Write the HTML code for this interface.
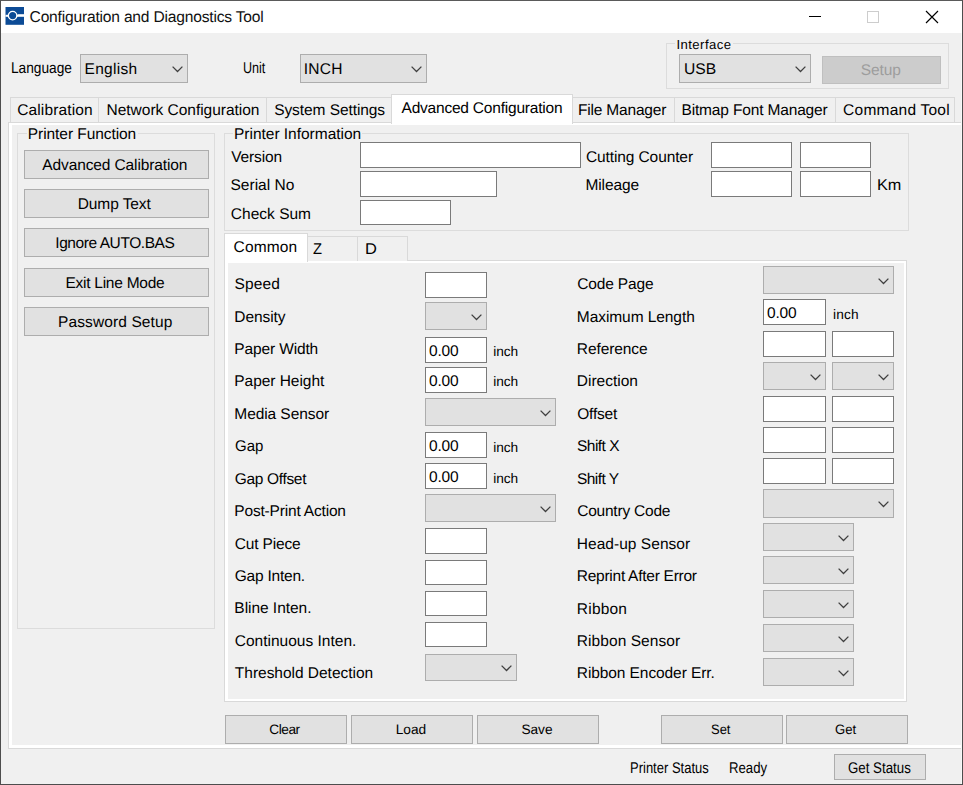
<!DOCTYPE html>
<html><head><meta charset="utf-8"><title>Configuration and Diagnostics Tool</title>
<style>
*{box-sizing:border-box;margin:0;padding:0}
html,body{width:963px;height:785px;overflow:hidden;background:#f0f0f0}
body{font-family:"Liberation Sans",sans-serif;font-size:15px;color:#000;position:relative;text-rendering:geometricPrecision}
div,svg,span{position:absolute}
.t{white-space:nowrap;line-height:20px;height:20px}
.in{background:#fff;border:1px solid #7a7a7a}
.cb{background:#e1e1e1;border:1px solid #adadad}
.btn{background:#e1e1e1;border:1px solid #adadad}
.gb{border:1px solid #dcdcdc}
.tab{border:1px solid #d9d9d9;border-bottom:none;background:#f0f0f0}
</style></head><body>

<div style="left:1px;top:1px;width:961px;height:32px;background:#fff"></div>
<svg style="left:5px;top:6px" width="20" height="20" viewBox="0 0 20 20"><rect x="0.5" y="1" width="18.5" height="17.8" fill="#0c4b96"/><rect x="0.5" y="8.8" width="18.5" height="2" fill="#fff"/><path d="M12 8.8L13.2 7.9H19V8.8Z" fill="#fff"/><circle cx="7.6" cy="9.6" r="4.25" fill="#0c4b96" stroke="#fff" stroke-width="1.3"/></svg>
<div class="t" style="top:8px;font-size:15.6px;left:29.58px;letter-spacing:-0.198px;color:#111;">Configuration and Diagnostics Tool</div>
<div style="left:809px;top:16px;width:12px;height:1px;background:#000"></div>
<div style="left:867px;top:11px;width:12px;height:12px;border:1px solid #cdcdcd"></div>
<svg style="left:925px;top:10px" width="14" height="14" viewBox="0 0 14 14"><path d="M1 1L13 13M13 1L1 13" stroke="#000" stroke-width="1.15" fill="none"/></svg>
<div class="t" style="top:59px;font-size:15.5px;left:10.74px;transform-origin:0 50%;transform:scaleX(0.8845);">Language</div>
<div class="cb" style="left:80px;top:54px;width:108px;height:29px"><svg style="right:4.2px;top:11.0px" width="11" height="7" viewBox="0 0 11 7"><path d="M0.6 0.6L5.5 5.5L10.4 0.6" fill="none" stroke="#404040" stroke-width="1.3"/></svg></div>
<div class="t" style="top:60px;font-size:15.5px;left:84.60px;letter-spacing:0.283px;">English</div>
<div class="t" style="top:59px;font-size:15.5px;left:242.91px;transform-origin:0 50%;transform:scaleX(0.8104);">Unit</div>
<div class="cb" style="left:300px;top:54px;width:127px;height:29px"><svg style="right:4.2px;top:11.0px" width="11" height="7" viewBox="0 0 11 7"><path d="M0.6 0.6L5.5 5.5L10.4 0.6" fill="none" stroke="#404040" stroke-width="1.3"/></svg></div>
<div class="t" style="top:60px;font-size:15.5px;left:303.69px;letter-spacing:0.297px;">INCH</div>
<div class="gb" style="left:666px;top:43px;width:283px;height:46px;"></div>
<div style="left:675.3px;top:43px;width:57.5px;height:1px;background:#f0f0f0"></div>
<div class="t" style="top:35px;font-size:13.1px;left:676.41px;letter-spacing:0.464px;">Interface</div>
<div class="cb" style="left:679px;top:54px;width:132px;height:29px"><svg style="right:4.2px;top:11.0px" width="11" height="7" viewBox="0 0 11 7"><path d="M0.6 0.6L5.5 5.5L10.4 0.6" fill="none" stroke="#404040" stroke-width="1.3"/></svg></div>
<div class="t" style="top:60px;font-size:15.5px;left:683.80px;transform-origin:0 50%;transform:scaleX(1.0100);">USB</div>
<div class="btn" style="left:822px;top:56px;width:119px;height:28px;background:#cccccc;border-color:#bfbfbf"></div>
<div class="t" style="top:61px;font-size:15.5px;left:860.70px;letter-spacing:-0.067px;color:#9d9d9d;">Setup</div>
<div style="left:8px;top:122px;width:960px;height:627px;border:1px solid #d9d9d9;background:#fff"></div>
<div style="left:12px;top:125px;width:949px;height:620px;background:#f0f0f0"></div>
<div style="left:961px;top:33px;width:1px;height:751px;background:#f8f8f8"></div>
<div class="tab" style="left:10px;top:97px;width:89px;height:25px;"></div>
<div class="t" style="top:101px;font-size:15.5px;left:17.16px;letter-spacing:0.134px;">Calibration</div>
<div class="tab" style="left:98px;top:97px;width:169px;height:25px;"></div>
<div class="t" style="top:101px;font-size:15.5px;left:106.56px;letter-spacing:-0.021px;">Network Configuration</div>
<div class="tab" style="left:266px;top:97px;width:126px;height:25px;"></div>
<div class="t" style="top:101px;font-size:15.5px;left:274.20px;letter-spacing:-0.076px;">System Settings</div>
<div class="tab" style="left:572px;top:97px;width:103px;height:25px;"></div>
<div class="t" style="top:101px;font-size:15.5px;left:578.02px;letter-spacing:-0.191px;">File Manager</div>
<div class="tab" style="left:674px;top:97px;width:162px;height:25px;"></div>
<div class="t" style="top:101px;font-size:15.5px;left:681.48px;letter-spacing:-0.157px;">Bitmap Font Manager</div>
<div class="tab" style="left:835px;top:97px;width:120px;height:25px;"></div>
<div class="t" style="top:101px;font-size:15.5px;left:843.12px;letter-spacing:0.236px;">Command Tool</div>
<div class="tab" style="left:391px;top:94px;width:182px;height:30px;background:#fff"></div>
<div class="t" style="top:99px;font-size:15.5px;left:401.51px;letter-spacing:-0.208px;">Advanced Configuration</div>
<div class="gb" style="left:17px;top:133px;width:198px;height:496px;"></div>
<div style="left:26.5px;top:133px;width:111.1px;height:1px;background:#f0f0f0"></div>
<div class="t" style="top:125px;font-size:15.5px;left:27.83px;letter-spacing:-0.068px;">Printer Function</div>
<div class="btn" style="left:24px;top:150px;width:185px;height:29px;"></div>
<div class="t" style="top:156px;font-size:15.5px;left:42.36px;letter-spacing:-0.121px;">Advanced Calibration</div>
<div class="btn" style="left:24px;top:189px;width:185px;height:29px;"></div>
<div class="t" style="top:195px;font-size:15.5px;left:77.64px;letter-spacing:-0.073px;">Dump Text</div>
<div class="btn" style="left:24px;top:228px;width:185px;height:29px;"></div>
<div class="t" style="top:234px;font-size:15.5px;left:55.27px;letter-spacing:-0.424px;">Ignore AUTO.BAS</div>
<div class="btn" style="left:24px;top:268px;width:185px;height:29px;"></div>
<div class="t" style="top:274px;font-size:15.5px;left:65.47px;letter-spacing:-0.258px;">Exit Line Mode</div>
<div class="btn" style="left:24px;top:307px;width:185px;height:29px;"></div>
<div class="t" style="top:313px;font-size:15.5px;left:58.02px;letter-spacing:0.111px;">Password Setup</div>
<div class="gb" style="left:224px;top:133px;width:685px;height:98px;"></div>
<div style="left:233px;top:133px;width:129.3px;height:1px;background:#f0f0f0"></div>
<div class="t" style="top:125px;font-size:15.5px;left:234.00px;letter-spacing:-0.018px;">Printer Information</div>
<div class="t" style="top:148px;font-size:15.5px;left:231.20px;letter-spacing:-0.133px;">Version</div>
<div class="t" style="top:176px;font-size:15.5px;left:230.44px;letter-spacing:0.028px;">Serial No</div>
<div class="t" style="top:205px;font-size:15.5px;left:230.79px;letter-spacing:0.018px;">Check Sum</div>
<div class="in" style="left:360px;top:142px;width:221px;height:26px"></div>
<div class="in" style="left:360px;top:171px;width:137px;height:26px"></div>
<div class="in" style="left:360px;top:200px;width:91px;height:25px"></div>
<div class="t" style="top:148px;font-size:15.5px;left:585.91px;letter-spacing:-0.101px;">Cutting Counter</div>
<div class="t" style="top:176px;font-size:15.5px;left:585.45px;letter-spacing:-0.115px;">Mileage</div>
<div class="in" style="left:711px;top:142px;width:81px;height:26px"></div>
<div class="in" style="left:800px;top:142px;width:71px;height:26px"></div>
<div class="in" style="left:711px;top:171px;width:81px;height:26px"></div>
<div class="in" style="left:800px;top:171px;width:71px;height:26px"></div>
<div class="t" style="top:176px;font-size:15.5px;left:876.60px;transform-origin:0 50%;transform:scaleX(1.0470);">Km</div>
<div style="left:224px;top:260px;width:683px;height:442px;border:1px solid #d9d9d9;background:#fff"></div>
<div style="left:228px;top:263px;width:676px;height:436px;background:#f0f0f0"></div>
<div class="tab" style="left:307px;top:236px;width:51px;height:25px;"></div>
<div class="t" style="top:240px;font-size:15.5px;left:313.20px;transform-origin:0 50%;transform:scaleX(0.9480);">Z</div>
<div class="tab" style="left:357px;top:236px;width:51px;height:25px;"></div>
<div class="t" style="top:240px;font-size:15.5px;left:365.20px;transform-origin:0 50%;transform:scaleX(1.0618);">D</div>
<div class="tab" style="left:224px;top:233px;width:84px;height:29px;background:#fff"></div>
<div class="t" style="top:238px;font-size:15.5px;left:233.62px;letter-spacing:0.138px;">Common</div>
<div class="t" style="top:275px;font-size:15.5px;left:234.41px;letter-spacing:0.183px;">Speed</div>
<div class="t" style="top:308px;font-size:15.5px;left:234.34px;letter-spacing:-0.093px;">Density</div>
<div class="t" style="top:340px;font-size:15.5px;left:234.34px;letter-spacing:-0.141px;">Paper Width</div>
<div class="t" style="top:372px;font-size:15.5px;left:234.34px;letter-spacing:-0.045px;">Paper Height</div>
<div class="t" style="top:405px;font-size:15.5px;left:234.34px;letter-spacing:-0.080px;">Media Sensor</div>
<div class="t" style="top:437px;font-size:15.5px;left:234.57px;transform-origin:0 50%;transform:scaleX(0.9670);">Gap</div>
<div class="t" style="top:470px;font-size:15.5px;left:234.70px;letter-spacing:-0.324px;">Gap Offset</div>
<div class="t" style="top:502px;font-size:15.5px;left:234.34px;letter-spacing:-0.184px;">Post-Print Action</div>
<div class="t" style="top:535px;font-size:15.5px;left:234.70px;letter-spacing:-0.154px;">Cut Piece</div>
<div class="t" style="top:567px;font-size:15.5px;left:234.70px;letter-spacing:-0.212px;">Gap Inten.</div>
<div class="t" style="top:599px;font-size:15.5px;left:234.34px;letter-spacing:-0.038px;">Bline Inten.</div>
<div class="t" style="top:632px;font-size:15.5px;left:234.70px;letter-spacing:0.009px;">Continuous Inten.</div>
<div class="t" style="top:664px;font-size:15.5px;left:234.86px;letter-spacing:-0.025px;">Threshold Detection</div>
<div class="t" style="top:275px;font-size:15.5px;left:577.16px;letter-spacing:-0.130px;">Code Page</div>
<div class="t" style="top:308px;font-size:15.5px;left:576.84px;letter-spacing:-0.074px;">Maximum Length</div>
<div class="t" style="top:340px;font-size:15.5px;left:576.84px;letter-spacing:-0.090px;">Reference</div>
<div class="t" style="top:372px;font-size:15.5px;left:576.84px;letter-spacing:-0.003px;">Direction</div>
<div class="t" style="top:405px;font-size:15.5px;left:577.22px;letter-spacing:-0.212px;">Offset</div>
<div class="t" style="top:437px;font-size:15.5px;left:576.99px;letter-spacing:-0.518px;">Shift X</div>
<div class="t" style="top:470px;font-size:15.5px;left:576.99px;letter-spacing:-0.563px;">Shift Y</div>
<div class="t" style="top:502px;font-size:15.5px;left:577.16px;letter-spacing:-0.212px;">Country Code</div>
<div class="t" style="top:535px;font-size:15.5px;left:576.84px;letter-spacing:0.034px;">Head-up Sensor</div>
<div class="t" style="top:567px;font-size:15.5px;left:576.84px;letter-spacing:-0.266px;">Reprint After Error</div>
<div class="t" style="top:600px;font-size:15.5px;left:576.84px;letter-spacing:0.208px;">Ribbon</div>
<div class="t" style="top:632px;font-size:15.5px;left:576.84px;letter-spacing:0.065px;">Ribbon Sensor</div>
<div class="t" style="top:664px;font-size:15.5px;left:576.84px;letter-spacing:-0.091px;">Ribbon Encoder Err.</div>
<div class="in" style="left:425px;top:272px;width:62px;height:26px"></div>
<div class="cb" style="left:425px;top:302px;width:62px;height:28px"><svg style="right:4.2px;top:10.5px" width="11" height="7" viewBox="0 0 11 7"><path d="M0.6 0.6L5.5 5.5L10.4 0.6" fill="none" stroke="#404040" stroke-width="1.3"/></svg></div>
<div class="in" style="left:425px;top:337px;width:62px;height:26px"></div>
<div class="t" style="top:342px;font-size:15.5px;left:429.10px;letter-spacing:-0.207px;">0.00</div>
<div class="t" style="top:342px;font-size:13.7px;left:493.19px;letter-spacing:-0.067px;">inch</div>
<div class="in" style="left:425px;top:367px;width:62px;height:26px"></div>
<div class="t" style="top:372px;font-size:15.5px;left:429.10px;letter-spacing:-0.207px;">0.00</div>
<div class="t" style="top:372px;font-size:13.7px;left:493.19px;letter-spacing:-0.067px;">inch</div>
<div class="cb" style="left:425px;top:398px;width:131px;height:28px"><svg style="right:4.2px;top:10.5px" width="11" height="7" viewBox="0 0 11 7"><path d="M0.6 0.6L5.5 5.5L10.4 0.6" fill="none" stroke="#404040" stroke-width="1.3"/></svg></div>
<div class="in" style="left:425px;top:432px;width:62px;height:26px"></div>
<div class="t" style="top:437px;font-size:15.5px;left:429.10px;letter-spacing:-0.207px;">0.00</div>
<div class="t" style="top:438px;font-size:13.7px;left:493.19px;letter-spacing:-0.067px;">inch</div>
<div class="in" style="left:425px;top:463px;width:62px;height:26px"></div>
<div class="t" style="top:468px;font-size:15.5px;left:429.10px;letter-spacing:-0.207px;">0.00</div>
<div class="t" style="top:469px;font-size:13.7px;left:493.19px;letter-spacing:-0.067px;">inch</div>
<div class="cb" style="left:425px;top:494px;width:131px;height:28px"><svg style="right:4.2px;top:10.5px" width="11" height="7" viewBox="0 0 11 7"><path d="M0.6 0.6L5.5 5.5L10.4 0.6" fill="none" stroke="#404040" stroke-width="1.3"/></svg></div>
<div class="in" style="left:425px;top:528px;width:62px;height:26px"></div>
<div class="in" style="left:425px;top:560px;width:62px;height:25px"></div>
<div class="in" style="left:425px;top:591px;width:62px;height:25px"></div>
<div class="in" style="left:425px;top:622px;width:62px;height:25px"></div>
<div class="cb" style="left:425px;top:654px;width:92px;height:27px"><svg style="right:4.2px;top:10.0px" width="11" height="7" viewBox="0 0 11 7"><path d="M0.6 0.6L5.5 5.5L10.4 0.6" fill="none" stroke="#404040" stroke-width="1.3"/></svg></div>
<div class="cb" style="left:763px;top:266px;width:131px;height:28px"><svg style="right:4.2px;top:10.5px" width="11" height="7" viewBox="0 0 11 7"><path d="M0.6 0.6L5.5 5.5L10.4 0.6" fill="none" stroke="#404040" stroke-width="1.3"/></svg></div>
<div class="in" style="left:763px;top:299px;width:63px;height:26px"></div>
<div class="t" style="top:304px;font-size:15.5px;left:767.10px;letter-spacing:-0.207px;">0.00</div>
<div class="t" style="top:305px;font-size:13.7px;left:833.09px;letter-spacing:0.103px;">inch</div>
<div class="in" style="left:763px;top:331px;width:63px;height:26px"></div>
<div class="in" style="left:832px;top:331px;width:62px;height:26px"></div>
<div class="cb" style="left:763px;top:362px;width:63px;height:28px"><svg style="right:4.2px;top:10.5px" width="11" height="7" viewBox="0 0 11 7"><path d="M0.6 0.6L5.5 5.5L10.4 0.6" fill="none" stroke="#404040" stroke-width="1.3"/></svg></div>
<div class="cb" style="left:832px;top:362px;width:62px;height:28px"><svg style="right:4.2px;top:10.5px" width="11" height="7" viewBox="0 0 11 7"><path d="M0.6 0.6L5.5 5.5L10.4 0.6" fill="none" stroke="#404040" stroke-width="1.3"/></svg></div>
<div class="in" style="left:763px;top:396px;width:63px;height:26px"></div>
<div class="in" style="left:832px;top:396px;width:62px;height:26px"></div>
<div class="in" style="left:763px;top:427px;width:63px;height:26px"></div>
<div class="in" style="left:832px;top:427px;width:62px;height:26px"></div>
<div class="in" style="left:763px;top:458px;width:63px;height:26px"></div>
<div class="in" style="left:832px;top:458px;width:62px;height:26px"></div>
<div class="cb" style="left:763px;top:489px;width:131px;height:29px"><svg style="right:4.2px;top:11.0px" width="11" height="7" viewBox="0 0 11 7"><path d="M0.6 0.6L5.5 5.5L10.4 0.6" fill="none" stroke="#404040" stroke-width="1.3"/></svg></div>
<div class="cb" style="left:763px;top:523px;width:91px;height:28px"><svg style="right:4.2px;top:10.5px" width="11" height="7" viewBox="0 0 11 7"><path d="M0.6 0.6L5.5 5.5L10.4 0.6" fill="none" stroke="#404040" stroke-width="1.3"/></svg></div>
<div class="cb" style="left:763px;top:556px;width:91px;height:28px"><svg style="right:4.2px;top:10.5px" width="11" height="7" viewBox="0 0 11 7"><path d="M0.6 0.6L5.5 5.5L10.4 0.6" fill="none" stroke="#404040" stroke-width="1.3"/></svg></div>
<div class="cb" style="left:763px;top:590px;width:91px;height:28px"><svg style="right:4.2px;top:10.5px" width="11" height="7" viewBox="0 0 11 7"><path d="M0.6 0.6L5.5 5.5L10.4 0.6" fill="none" stroke="#404040" stroke-width="1.3"/></svg></div>
<div class="cb" style="left:763px;top:624px;width:91px;height:28px"><svg style="right:4.2px;top:10.5px" width="11" height="7" viewBox="0 0 11 7"><path d="M0.6 0.6L5.5 5.5L10.4 0.6" fill="none" stroke="#404040" stroke-width="1.3"/></svg></div>
<div class="cb" style="left:763px;top:658px;width:91px;height:28px"><svg style="right:4.2px;top:10.5px" width="11" height="7" viewBox="0 0 11 7"><path d="M0.6 0.6L5.5 5.5L10.4 0.6" fill="none" stroke="#404040" stroke-width="1.3"/></svg></div>
<div class="btn" style="left:225px;top:715px;width:122px;height:29px;"></div>
<div class="t" style="top:720px;font-size:13.7px;left:269.35px;letter-spacing:-0.472px;">Clear</div>
<div class="btn" style="left:351px;top:715px;width:122px;height:29px;"></div>
<div class="t" style="top:720px;font-size:13.7px;left:395.73px;letter-spacing:-0.020px;">Load</div>
<div class="btn" style="left:477px;top:715px;width:122px;height:29px;"></div>
<div class="t" style="top:720px;font-size:13.7px;left:521.41px;letter-spacing:-0.027px;">Save</div>
<div class="btn" style="left:661px;top:715px;width:122px;height:29px;"></div>
<div class="t" style="top:720px;font-size:13.7px;left:710.51px;transform-origin:0 50%;transform:scaleX(0.9471);">Set</div>
<div class="btn" style="left:786px;top:715px;width:122px;height:29px;"></div>
<div class="t" style="top:720px;font-size:13.7px;left:835.37px;transform-origin:0 50%;transform:scaleX(0.9595);">Get</div>
<div class="t" style="top:759px;font-size:15.5px;left:630.25px;transform-origin:0 50%;transform:scaleX(0.8382);">Printer Status</div>
<div class="t" style="top:759px;font-size:15.5px;left:729.06px;transform-origin:0 50%;transform:scaleX(0.8509);">Ready</div>
<div class="btn" style="left:834px;top:754px;width:92px;height:26px;"></div>
<div class="t" style="top:759px;font-size:15.5px;left:847.77px;transform-origin:0 50%;transform:scaleX(0.8576);">Get Status</div>
<div style="left:0;top:0;width:963px;height:785px;border:1px solid #4d4d4d;border-top-color:#5a5a5a"></div>
</body></html>
